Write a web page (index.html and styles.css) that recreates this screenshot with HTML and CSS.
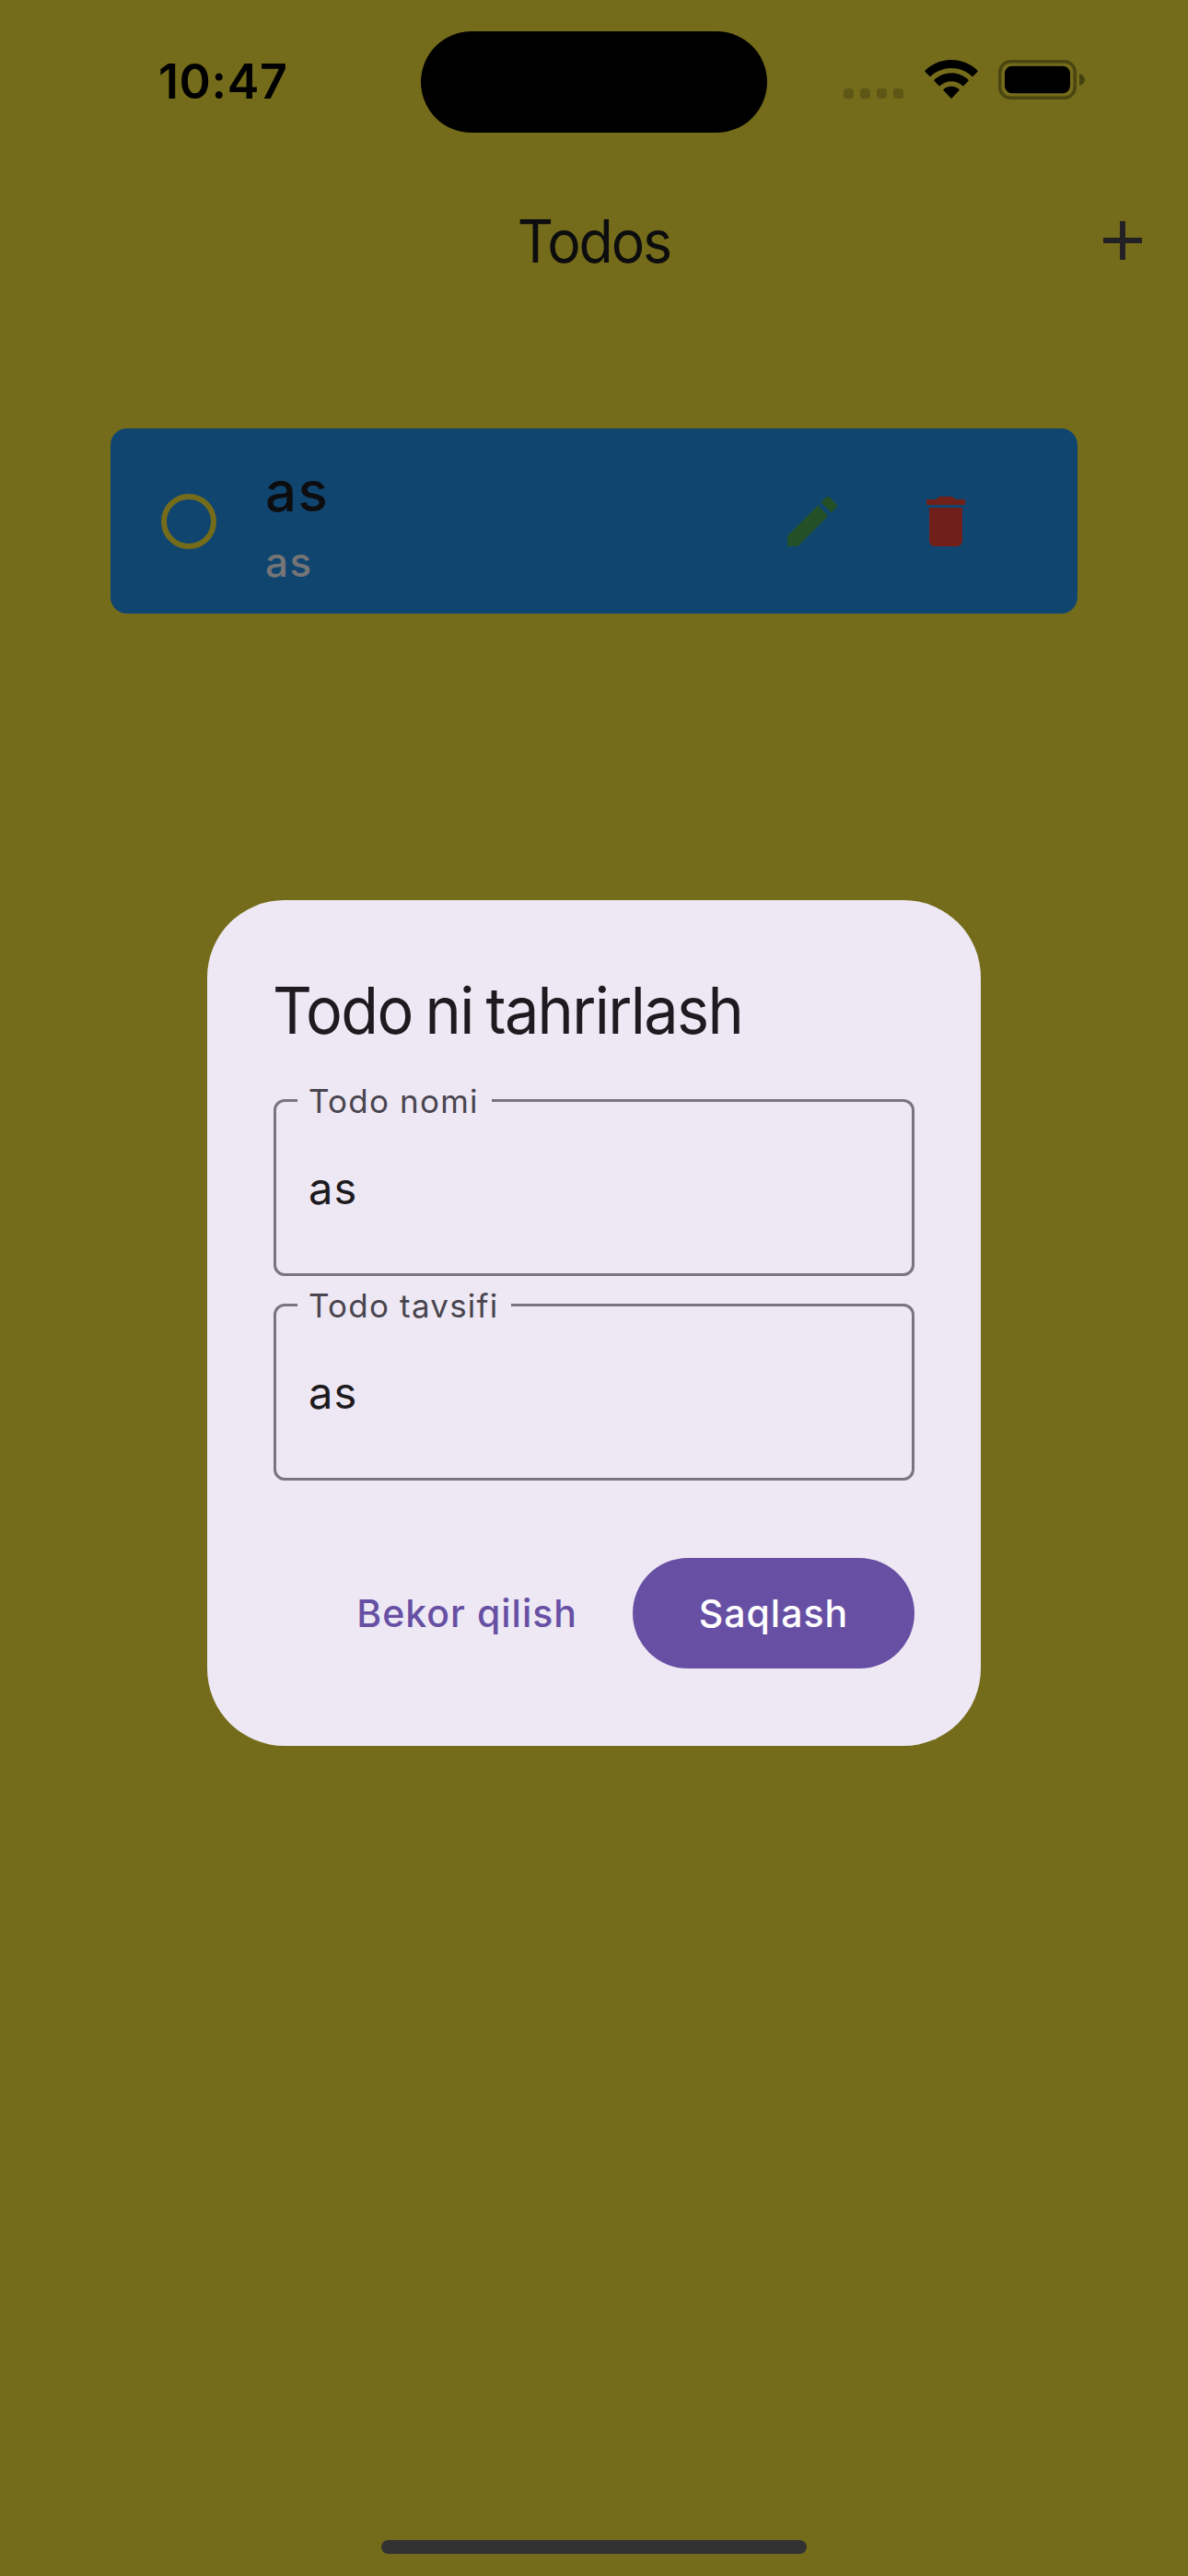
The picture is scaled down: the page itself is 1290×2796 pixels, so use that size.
FILE: index.html
```html
<!DOCTYPE html>
<html lang="uz">
<head>
<meta charset="utf-8">
<title>Todos</title>
<link rel="stylesheet" href="styles.css">
</head>
<body>
<main class="screen">
  <div class="status">
    <div class="clock">10:47</div>
    <div class="island"></div>
    <div class="indicators">
      <svg class="signal" viewBox="0 0 65 11"><rect width="11" height="11" rx="4"/><rect x="18" width="11" height="11" rx="4"/><rect x="36" width="11" height="11" rx="4"/><rect x="54" width="11" height="11" rx="4"/></svg>
      <svg class="wifi" viewBox="0 0 58 42"><path d="M29 0C18 0 8 4.300 .6 11.400Q0 12.200 .6 13L5.400 17.800Q6 18.300 6.700 17.700C12.600 12 20.400 8.900 29 8.900S45.400 12 51.300 17.700Q52 18.300 52.600 17.800L57.400 13Q58 12.200 57.400 11.400C50 4.300 40 0 29 0Z"/><path d="M29 14.300C22 14.300 15.500 17 10.600 21.500Q10 22.300 10.600 23L15.500 28Q16.200 28.400 16.900 27.900C20.200 25 24.400 23.300 29 23.300S37.800 25 41.100 27.900Q41.800 28.400 42.500 28L47.400 23Q48 22.300 47.400 21.500C42.500 17 36 14.300 29 14.300Z"/><path d="M29 28.700C25.900 28.700 23 29.800 20.700 31.700Q20 32.500 20.700 33.300L28.400 41.400Q29 42 29.600 41.400L37.300 33.300Q38 32.500 37.300 31.700C35 29.800 32.100 28.700 29 28.700Z"/></svg>
      <svg class="battery" viewBox="0 0 94 43"><rect class="shell" x="1.750" y="1.750" width="81.500" height="39.500" rx="11.500"/><rect x="7" y="6.700" width="71" height="29.600" rx="8"/><path class="nub" d="M88 15V28Q94 26 94 21.500T88 15Z"/></svg>
    </div>
  </div>
  <header class="appbar">
    <h1 class="appbar-title">Todos</h1>
    <svg class="icon add" viewBox="0 0 24 24"><path d="M19 13h-6v6h-2v-6H5v-2h6V5h2v6h6v2z"/></svg>
  </header>
  <section class="todo">
    <span class="check"></span>
    <div class="todo-text">
      <div class="todo-name">as</div>
      <div class="todo-desc">as</div>
    </div>
    <svg class="icon edit" viewBox="0 0 24 24"><path d="M3 17.250V21h3.750L17.810 9.940l-3.750-3.750L3 17.250zM20.710 7.040c.39-.39.39-1.020 0-1.410l-2.340-2.340c-.39-.39-1.020-.39-1.410 0l-1.830 1.830 3.750 3.750 1.830-1.830z"/></svg>
    <svg class="icon delete" viewBox="0 0 24 24"><path d="M6 19c0 1.100.9 2 2 2h8c1.100 0 2-.9 2-2V7H6v12zM19 4h-3.500l-.7-.7Q14.500 3 14.100 3H9.900Q9.500 3 9.200 3.300L8.500 4H5v2h14V4z"/></svg>
  </section>
  <div class="home"></div>
</main>
<div class="overlay">
  <form class="dialog">
    <h2 class="dialog-title">Todo ni tahrirlash</h2>
    <fieldset class="field"><legend>Todo nomi</legend><div class="value">as</div></fieldset>
    <fieldset class="field"><legend>Todo tavsifi</legend><div class="value">as</div></fieldset>
    <div class="actions">
      <button type="button" class="btn">Bekor qilish</button>
      <button type="button" class="btn filled">Saqlash</button>
    </div>
  </form>
</div>
</body>
</html>
```
FILE: styles.css
```css
* { box-sizing: border-box; }

body {
  margin: 0;
  background: #746c1a;
  font-family: Inter, "Liberation Sans", sans-serif;
}

h1, h2 { margin: 0; font-weight: 400; }

svg { display: block; flex: none; }

.screen {
  display: flex;
  flex-direction: column;
  width: 1290px;
  height: 2796px;
}

/* Status bar */
.status {
  display: grid;
  grid-template-columns: 457px 376px 1fr;
  height: 177px;
  padding-top: 34px;
}

.clock {
  padding-left: 172px;
  font-size: 52px;
  font-weight: 600;
  line-height: 110px;
  letter-spacing: 0.600px;
}

.island {
  height: 110px;
  border-radius: 55px;
  background: #000;
}

.indicators {
  display: flex;
  align-items: flex-start;
  padding: 31px 0 0 83px;
}

.signal { width: 65px; height: 11px; margin-top: 31px; fill: #5d5615; }
.wifi { width: 58px; height: 42px; margin-left: 22.500px; }
.battery { width: 94px; height: 43px; margin-left: 22.500px; }
.shell { fill: none; stroke: #4a4511; stroke-width: 3.500; }
.nub { fill: #464110; }

/* App bar */
.appbar {
  display: grid;
  grid-template-columns: 107px 1fr 107px;
  align-items: center;
  height: 168px;
}

.appbar-title {
  grid-column: 2;
  text-align: center;
  font-size: 64px;
  letter-spacing: -2.200px;
  color: #0d0d0f;
  transform: scaleX(0.95);
}

.icon { width: 72px; height: 72px; }
.add { fill: #222024; }

/* Todo row */
.todo {
  display: flex;
  align-items: center;
  width: 1050px;
  height: 201px;
  margin: 120px auto 0;
  padding: 1px 107px 0 55px;
  border-radius: 18px;
  background: #104570;
}

.check {
  width: 60px;
  height: 60px;
  border: 6px solid #746c1a;
  border-radius: 50%;
}

.todo-text { flex: 1; margin-left: 53px; }

.todo-name {
  font-size: 60px;
  font-weight: 500;
  line-height: 89px;
  letter-spacing: 1.500px;
  color: #0d0d0f;
}

.todo-desc {
  font-size: 44px;
  font-weight: 450;
  line-height: 65px;
  letter-spacing: 1.500px;
  color: #757575;
}

.edit { fill: #235026; }
.delete { margin-left: 73px; fill: #701f19; }

.home {
  width: 462px;
  height: 15px;
  margin: auto auto 24px;
  border-radius: 8px;
  background: #323232;
}

/* Dialog */
.overlay {
  position: absolute;
  inset: 0;
  display: flex;
  justify-content: center;
  align-items: flex-start;
  padding-top: 976.500px;
}

.dialog {
  width: 840px;
  height: 918px;
  padding: 72px;
  border-radius: 84px;
  background: #eee8f4;
}

.dialog-title {
  margin: 0 0 36.500px -1px;
  font-size: 70px;
  line-height: 96px;
  letter-spacing: -1.700px;
  word-spacing: -3.500px;
  white-space: nowrap;
  color: #1d1b20;
  transform: scaleX(0.95);
  transform-origin: left;
}

.field {
  height: 203.500px;
  margin: 0 0 18.500px;
  padding: 0 36px 0 23px;
  border: 3px solid #79747e;
  border-radius: 12px;
}

.field legend {
  height: 26px;
  padding: 0 14px 0 12px;
  font-size: 35px;
  line-height: 28px;
  letter-spacing: 1.200px;
  color: #49454f;
}

.value {
  padding-left: 12px;
  font-size: 47px;
  line-height: 166px;
  letter-spacing: 1px;
  color: #1d1b20;
}

.actions {
  display: flex;
  justify-content: flex-end;
  gap: 24px;
  margin-top: 84px;
}

.btn {
  height: 120px;
  padding: 1px 36px 0;
  border: 0;
  border-radius: 60px;
  background: none;
  font: 500 41px Inter, "Liberation Sans", sans-serif;
  letter-spacing: 1px;
  color: #6750a4;
}

.filled {
  width: 306px;
  background: #6750a4;
  color: #fff;
}
```
